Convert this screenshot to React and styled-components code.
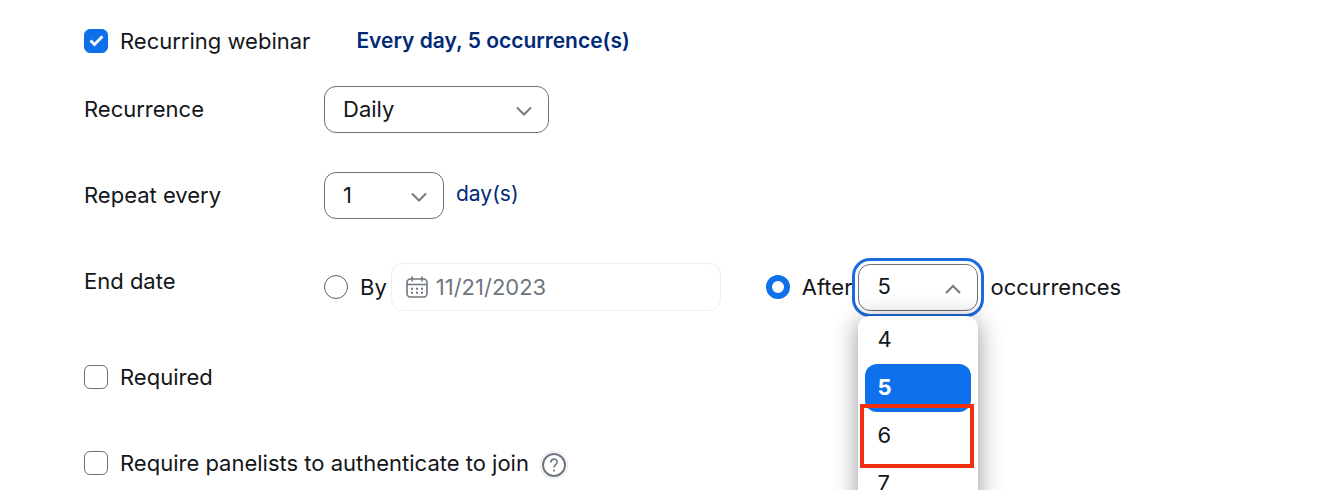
import { useState } from 'react';
import styled, { createGlobalStyle } from 'styled-components';

const GlobalStyle = createGlobalStyle`
  * {
    box-sizing: border-box;
  }
  body {
    margin: 0;
    background: #fff;
    color: #131619;
    font-family: Inter, 'Liberation Sans', sans-serif;
    font-size: 22px;
    line-height: 28px;
  }
`;

const Page = styled.main`
  min-height: 100vh;
  padding: 26px 84px 12px;
  overflow: hidden;
`;

const Form = styled.form`
  display: flex;
  flex-direction: column;
`;

const Row = styled.div`
  display: flex;
  align-items: center;
  gap: ${(props) => props.$gap || 0}px;
  min-height: ${(props) => props.$height || 46}px;
  margin-top: ${(props) => props.$top || 0}px;
`;

const RowLabel = styled.label`
  flex: 0 0 240px;
  padding: ${(props) => (props.$raised ? '4px 0 0' : '0 0 2px')};
  align-self: ${(props) => (props.$raised ? 'flex-start' : 'center')};
`;

const Choice = styled.label`
  display: flex;
  align-items: center;
  gap: 12px;
  white-space: nowrap;
`;

const Checkbox = styled.input`
  appearance: none;
  width: 24px;
  height: 24px;
  margin: 0;
  border: 1px solid #6e6e73;
  border-radius: 6px;
  background: #fff;

  &:checked {
    border-color: #0e71eb;
    background: #0e71eb
      url("data:image/svg+xml,%3Csvg xmlns='http://www.w3.org/2000/svg' viewBox='0 0 24 24'%3E%3Cpath d='M6.5 11.5l4 4 8-8.3' fill='none' stroke='white' stroke-width='2.8'/%3E%3C/svg%3E")
      center / 24px no-repeat;
  }
`;

const Radio = styled.input`
  appearance: none;
  width: 24px;
  height: 24px;
  margin: 0;
  border: 1px solid #5c5c61;
  border-radius: 50%;
  background: #fff;

  &:checked {
    border: 6px solid #0e71eb;
  }
`;

const Summary = styled.strong`
  color: #002a77;
  font-size: 21px;
  font-weight: 600;
`;

const Unit = styled.span`
  padding-bottom: 4px;
  color: #002a77;
  font-size: 21px;
`;

const SelectBox = styled.div`
  position: relative;
  width: ${(props) => props.$width}px;
`;

const Select = styled.select`
  appearance: none;
  display: block;
  width: 100%;
  height: 47px;
  padding: 0 44px 2px 18px;
  border: 1px solid #6e6e73;
  border-radius: 12px;
  outline: none;
  background: #fff;
  color: inherit;
  font: inherit;
  box-shadow: ${(props) => (props.$open ? '0 0 0 3px #fff, 0 0 0 6px #1a6bdb' : 'none')};
`;

const Chevron = styled.svg`
  position: absolute;
  top: 16px;
  right: 16px;
  width: 18px;
  height: 18px;
  pointer-events: none;
  fill: none;
  stroke: #747a82;
  stroke-width: 2;
`;

const DateBox = styled.div`
  position: relative;
  width: 330px;
  margin-left: 4px;
  margin-right: 45px;
`;

const DateInput = styled.input`
  display: block;
  width: 100%;
  height: 48px;
  padding: 0 16px 0 44px;
  border: 1px solid #ededf2;
  border-radius: 12px;
  background: #fff;
  color: #6e7680;
  font: inherit;
`;

const CalendarIcon = styled.svg`
  position: absolute;
  top: 12px;
  left: 14px;
  width: 24px;
  height: 24px;
  fill: none;
  stroke: #6e7680;
`;

const CountField = styled.div`
  display: flex;
  align-items: center;
  gap: 12px;
  margin-left: 6px;
`;

const Menu = styled.ul`
  position: absolute;
  top: 52px;
  left: 0;
  width: 120px;
  margin: 0;
  padding: 0 7px;
  list-style: none;
  border-radius: 12px;
  background: #fff;
  box-shadow: 0 4px 24px rgba(20, 20, 40, 0.45);
`;

const Option = styled.li`
  position: relative;
  height: 48px;
  padding: 0 12px;
  border-radius: 12px;
  background: ${(props) => (props.$selected ? '#0e71eb' : 'transparent')};
  color: ${(props) => (props.$selected ? '#fff' : 'inherit')};
  font-weight: ${(props) => (props.$selected ? 700 : 400)};
  line-height: 46px;
  cursor: pointer;
`;

const Highlight = styled.span`
  position: absolute;
  inset: -8px -3px -8px -5px;
  border: 4px solid #f03010;
  pointer-events: none;
`;

const HelpButton = styled.button`
  display: flex;
  margin-top: 4px;
  padding: 0;
  border: 0;
  border-radius: 50%;
  background: #fff;
  box-shadow: 0 0 0 1px #e6e6ee;

  svg {
    width: 26px;
    height: 26px;
    fill: none;
    stroke: #6e7680;
  }
`;

const DropDown = ({ id, width, options, value, onChange, open, children, ...rest }) => (
  <SelectBox $width={width}>
    <Select id={id} value={value} onChange={onChange} $open={open} {...rest}>
      {options.map((option) => (
        <option key={option}>{option}</option>
      ))}
    </Select>
    <Chevron viewBox="0 0 18 18" aria-hidden="true">
      <path d={open ? 'M2 13l7-7 7 7' : 'M2 5.5l7 7 7-7'} />
    </Chevron>
    {children}
  </SelectBox>
);

const counts = ['4', '5', '6', '7'];

const App = () => {
  const [recurrence, setRecurrence] = useState('Daily');
  const [interval, setInterval] = useState('1');
  const [count, setCount] = useState('5');

  return (
    <Page>
      <GlobalStyle />
      <Form>
        <Row $height={30} $gap={46}>
          <Choice>
            <Checkbox type="checkbox" defaultChecked />
            Recurring webinar
          </Choice>
          <Summary>Every day, {count} occurrence(s)</Summary>
        </Row>

        <Row $top={30}>
          <RowLabel htmlFor="recurrence">Recurrence</RowLabel>
          <DropDown
            id="recurrence"
            width={225}
            options={['Daily', 'Weekly', 'Monthly']}
            value={recurrence}
            onChange={(e) => setRecurrence(e.target.value)}
          />
        </Row>

        <Row $top={39}>
          <RowLabel htmlFor="interval">Repeat every</RowLabel>
          <Row $gap={12}>
            <DropDown
              id="interval"
              width={120}
              options={['1', '2', '3']}
              value={interval}
              onChange={(e) => setInterval(e.target.value)}
            />
            <Unit>day(s)</Unit>
          </Row>
        </Row>

        <Row $top={44}>
          <RowLabel as="span" id="end-date" $raised>
            End date
          </RowLabel>
          <Row role="radiogroup" aria-labelledby="end-date">
            <Choice>
              <Radio type="radio" name="end" />
              By
            </Choice>
            <DateBox>
              <DateInput aria-label="End by date" defaultValue="11/21/2023" disabled />
              <CalendarIcon viewBox="0 0 24 24" aria-hidden="true">
                <rect x="2" y="4" width="20" height="18" rx="3.5" strokeWidth="1.6" />
                <path d="M2 9.5h20M7 1.5v5M17 1.5v5" strokeWidth="1.6" />
                <path d="M6 13.8h2m3 0h2m3 0h2M6 17.8h2m3 0h2m3 0h2" strokeWidth="2" />
              </CalendarIcon>
            </DateBox>
            <Choice>
              <Radio type="radio" name="end" defaultChecked />
              After
            </Choice>
            <CountField>
              <DropDown
                width={120}
                options={counts}
                value={count}
                onChange={(e) => setCount(e.target.value)}
                aria-label="Number of occurrences"
                open
              >
                <Menu role="listbox" aria-label="Number of occurrences">
                  {counts.map((n) => (
                    <Option
                      key={n}
                      role="option"
                      aria-selected={n === count}
                      $selected={n === count}
                      onClick={() => setCount(n)}
                    >
                      {n}
                      {n === '6' && <Highlight />}
                    </Option>
                  ))}
                </Menu>
              </DropDown>
              <span>occurrences</span>
            </CountField>
          </Row>
        </Row>

        <Row $top={51} $height={30}>
          <Choice>
            <Checkbox type="checkbox" />
            Required
          </Choice>
        </Row>

        <Row $top={56} $height={30} $gap={12}>
          <Choice>
            <Checkbox type="checkbox" />
            Require panelists to authenticate to join
          </Choice>
          <HelpButton type="button" aria-label="Help">
            <svg viewBox="0 0 26 26" aria-hidden="true">
              <circle cx="13" cy="13" r="11" strokeWidth="2" />
              <path d="M9.8 10.6c0-4.6 6.4-4.4 6.4-.6 0 2.6-3.2 2.6-3.2 5.4M13 17.6v2" strokeWidth="1.6" />
            </svg>
          </HelpButton>
        </Row>
      </Form>
    </Page>
  );
};

export default App;
